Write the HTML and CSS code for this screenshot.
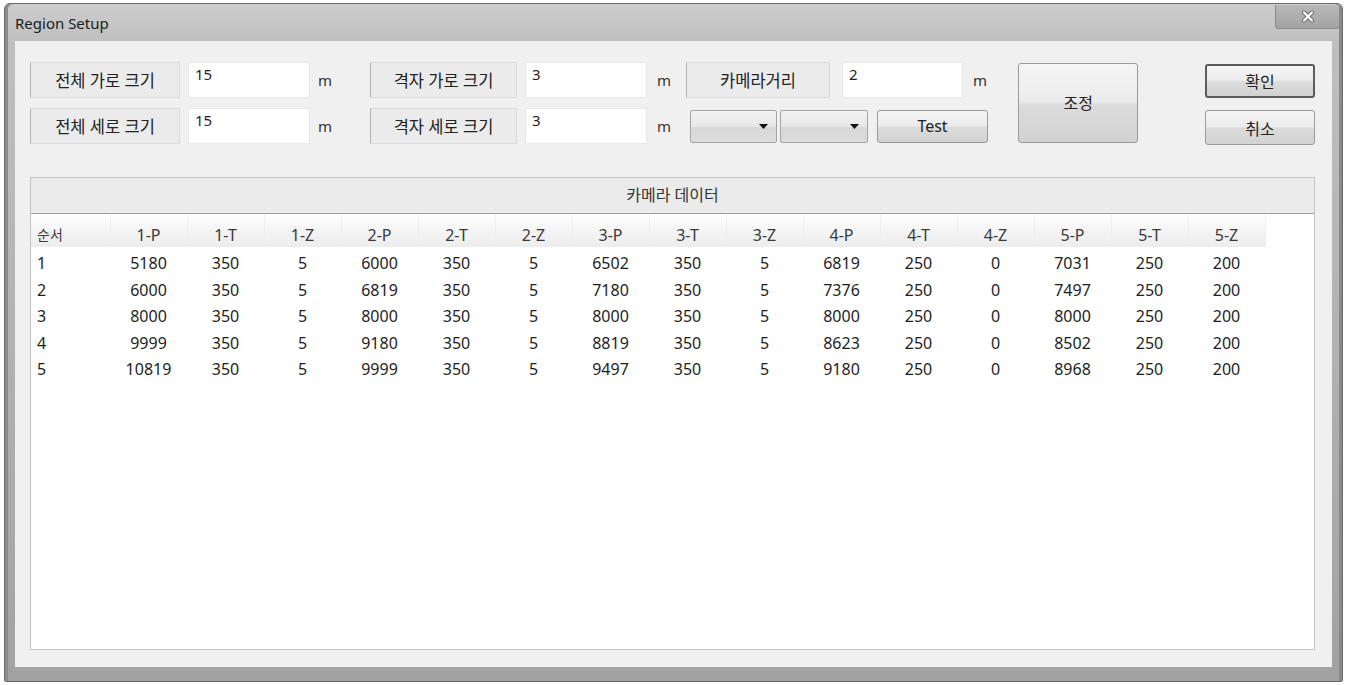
FILE: index.html
```html
<!DOCTYPE html>
<html lang="ko">
<head>
<meta charset="utf-8">
<title>Region Setup</title>
<link rel="stylesheet" href="styles.css">
</head>
<body>
<div class="window">
  <div class="titlebar">
    <span class="title">Region Setup</span>
    <div class="close">
      <svg width="14" height="13" viewBox="0 0 14 13"><path d="M3 2.5 L11 10.5 M11 2.5 L3 10.5" stroke="#6a6a6a" stroke-width="4" stroke-linecap="round"/><path d="M3 2.5 L11 10.5 M11 2.5 L3 10.5" stroke="#ffffff" stroke-width="2.2" stroke-linecap="round"/></svg>
    </div>
  </div>
  <div class="client">
    <div class="top">
      <div class="fields">
        <div class="row">
          <div class="lbl w150">전체 가로 크기</div>
          <div class="edit">15</div>
          <div class="unit u60">m</div>
          <div class="lbl w147">격자 가로 크기</div>
          <div class="edit">3</div>
          <div class="unit u39">m</div>
          <div class="lbl w144">카메라거리</div>
          <div class="edit e3">2</div>
          <div class="unit">m</div>
        </div>
        <div class="row">
          <div class="lbl w150">전체 세로 크기</div>
          <div class="edit">15</div>
          <div class="unit u60">m</div>
          <div class="lbl w147">격자 세로 크기</div>
          <div class="edit">3</div>
          <div class="unit u43">m</div>
          <div class="combo c1"><svg width="9" height="5" viewBox="0 0 9 5"><path d="M0 0 H9 L4.5 5 Z" fill="#111"/></svg></div>
          <div class="combo c2"><svg width="9" height="5" viewBox="0 0 9 5"><path d="M0 0 H9 L4.5 5 Z" fill="#111"/></svg></div>
          <button class="btn test">Test</button>
        </div>
      </div>
      <button class="btn big">조정</button>
      <div class="side">
        <button class="btn ok">확인</button>
        <button class="btn cancel">취소</button>
      </div>
    </div>
    <div class="group">
      <div class="group-title">카메라 데이터</div>
      <div class="list">
        <table class="grid">
          <colgroup>
            <col class="c-first">
            <col><col><col><col><col><col><col><col><col><col><col><col><col><col><col>
          </colgroup>
          <thead>
            <tr>
              <th class="first">순서</th>
              <th>1-P</th><th>1-T</th><th>1-Z</th>
              <th>2-P</th><th>2-T</th><th>2-Z</th>
              <th>3-P</th><th>3-T</th><th>3-Z</th>
              <th>4-P</th><th>4-T</th><th>4-Z</th>
              <th>5-P</th><th>5-T</th><th>5-Z</th>
            </tr>
          </thead>
          <tbody>
            <tr class="gap"><td colspan="16"></td></tr>
            <tr><td class="first">1</td><td>5180</td><td>350</td><td>5</td><td>6000</td><td>350</td><td>5</td><td>6502</td><td>350</td><td>5</td><td>6819</td><td>250</td><td>0</td><td>7031</td><td>250</td><td>200</td></tr>
            <tr><td class="first">2</td><td>6000</td><td>350</td><td>5</td><td>6819</td><td>350</td><td>5</td><td>7180</td><td>350</td><td>5</td><td>7376</td><td>250</td><td>0</td><td>7497</td><td>250</td><td>200</td></tr>
            <tr><td class="first">3</td><td>8000</td><td>350</td><td>5</td><td>8000</td><td>350</td><td>5</td><td>8000</td><td>350</td><td>5</td><td>8000</td><td>250</td><td>0</td><td>8000</td><td>250</td><td>200</td></tr>
            <tr><td class="first">4</td><td>9999</td><td>350</td><td>5</td><td>9180</td><td>350</td><td>5</td><td>8819</td><td>350</td><td>5</td><td>8623</td><td>250</td><td>0</td><td>8502</td><td>250</td><td>200</td></tr>
            <tr><td class="first">5</td><td>10819</td><td>350</td><td>5</td><td>9999</td><td>350</td><td>5</td><td>9497</td><td>350</td><td>5</td><td>9180</td><td>250</td><td>0</td><td>8968</td><td>250</td><td>200</td></tr>
          </tbody>
        </table>
      </div>
    </div>
  </div>
</div>
</body>
</html>
```
FILE: styles.css
```css
* { box-sizing: border-box; }

body {
  margin: 0;
  background: #ffffff;
  font-family: "Noto Sans", "Noto Sans CJK KR", sans-serif;
  color: #1e1e1e;
}

.window {
  margin: 3px 0 0 4px;
  width: 1339px;
  height: 679px;
  border: 1px solid #6a6a6a;
  border-radius: 6px 6px 2px 2px;
  background: linear-gradient(#cdcdcd 0, #bfbfbf 38px, #b4b4b4 300px, #a2a2a2 100%);
  box-shadow: inset 3px 0 0 #8a8a8a, inset -3px 0 0 #8a8a8a;
  padding: 0 10px 14px;
  display: flex;
  flex-direction: column;
}

.titlebar {
  height: 37px;
  display: flex;
  align-items: flex-start;
  justify-content: space-between;
}

.title {
  font-size: 15px;
  line-height: 15px;
  margin-top: 12px;
  color: #1c1c1c;
}

.close {
  width: 65px;
  height: 24px;
  margin-right: -8px;
  margin-top: 1px;
  border: 1px solid #8a8a8a;
  border-top: none;
  border-radius: 0 0 4px 4px;
  background: linear-gradient(#b8b8b8, #a3a3a3);
  display: flex;
  align-items: center;
  justify-content: center;
}

.client {
  flex: 1;
  background: #f0f0f0;
  padding: 21px 17px 0 15px;
}

.top {
  display: flex;
  align-items: flex-start;
}

.fields {
  width: 990px;
  display: flex;
  flex-direction: column;
  gap: 10px;
}

.row {
  display: flex;
  align-items: center;
  height: 36px;
}

.lbl {
  height: 36px;
  background: #ebebeb;
  border: 1px solid #dadada;
  border-left-color: #b4b4b4;
  display: flex;
  align-items: center;
  justify-content: center;
  font-size: 16.5px;
  color: #222;
}
.w150 { width: 150px; }
.w147 { width: 147px; }
.w144 { width: 144px; }

.edit {
  width: 122px;
  height: 36px;
  margin-left: 8px;
  background: #ffffff;
  border: 1px solid #e9e9e9;
  padding: 1px 0 0 6px;
  font-size: 15px;
  line-height: 20px;
}
.edit.e3 { width: 121px; margin-left: 12px; }

.unit {
  font-size: 15px;
  padding-left: 10px;
  color: #333;
}
.u60 { width: 60px; padding-left: 8px; }
.u39 { width: 39px; }
.u43 { width: 43px; }

.combo {
  height: 33px;
  border: 1px solid #a4a4a4;
  border-radius: 2px;
  background: linear-gradient(#f3f3f3, #e6e6e6 50%, #d8d8d8 51%, #dcdcdc);
  display: flex;
  align-items: center;
  justify-content: flex-end;
  padding-right: 8px;
}
.c1 { width: 87px; }
.c2 { width: 88px; margin-left: 3px; }

.btn {
  font-family: "Noto Sans", "Noto Sans CJK KR", sans-serif;
  font-size: 16px;
  color: #222;
  border: 1px solid #9a9a9a;
  border-radius: 3px;
  background: linear-gradient(#f5f5f5, #ebebeb 48%, #dcdcdc 52%, #d2d2d2);
  padding: 0;
  margin: 0;
}

.test {
  width: 111px;
  height: 33px;
  margin-left: 9px;
}

.big {
  width: 120px;
  height: 80px;
  margin-top: 1px;
  padding-bottom: 2px;
}

.side {
  margin-left: 67px;
  width: 110px;
  display: flex;
  flex-direction: column;
}

.ok {
  height: 34px;
  margin-top: 2px;
  border: 2px solid #5c5c5c;
}

.cancel {
  height: 35px;
  margin-top: 12px;
}

.group {
  margin-top: 32px;
  width: 1285px;
  height: 473px;
  border: 1px solid #c4c4c4;
  background: #ebebeb;
  display: flex;
  flex-direction: column;
}

.group-title {
  height: 35px;
  display: flex;
  align-items: center;
  justify-content: center;
  font-size: 16px;
  padding-bottom: 4px;
  color: #333;
}

.list {
  flex: 1;
  background: #ffffff;
  border-top: 1px solid #9e9e9e;
}

.grid {
  width: 1234px;
  table-layout: fixed;
  border-collapse: collapse;
  font-size: 16px;
}

.grid col { width: 77px; }
.grid col.c-first { width: 79px; }

.grid th {
  height: 33px;
  padding: 10px 0 0;
  line-height: 22px;
  font-weight: normal;
  text-align: center;
  vertical-align: top;
  color: #3a3a3a;
  background: linear-gradient(#ffffff, #f4f4f4 50%, #ececec);
  border-right: 1px solid #efefef;
}

.grid td {
  height: 26.5px;
  padding: 0;
  line-height: 26px;
  text-align: center;
  color: #1e1e1e;
}

.grid .first {
  text-align: left;
  padding-left: 6px;
}
.grid th.first {
  font-size: 14px;
}

.grid tr.gap td {
  height: 3px;
  line-height: 3px;
}
```
